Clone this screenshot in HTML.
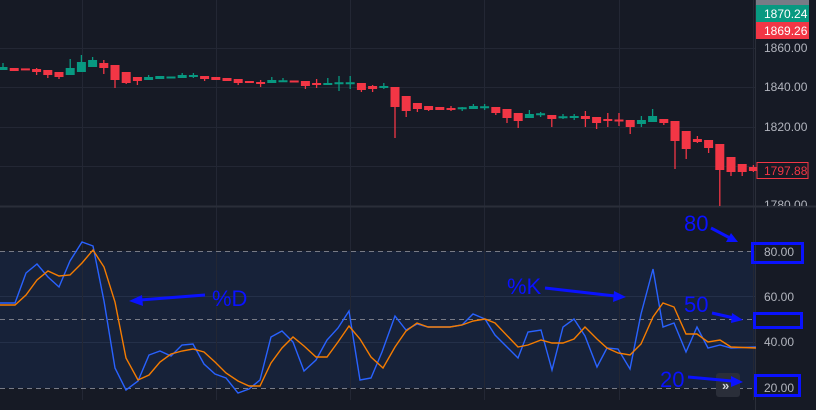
<!DOCTYPE html>
<html><head><meta charset="utf-8"><style>
html,body{margin:0;padding:0;background:#161a25;width:816px;height:410px;overflow:hidden;font-family:"Liberation Sans",sans-serif}
svg{position:absolute;left:0;top:0}
</style></head><body>
<svg id="s" width="816" height="410" xmlns="http://www.w3.org/2000/svg" font-family="Liberation Sans, sans-serif">
<defs><clipPath id="top"><rect x="0" y="0" width="816" height="206"/></clipPath></defs>
<rect width="816" height="410" fill="#161a25"/>
<rect x="0" y="251" width="755" height="137" fill="#172239"/>
<g stroke="#232734" stroke-width="1">
<line x1="0" y1="48.5" x2="755" y2="48.5"/><line x1="0" y1="87.5" x2="755" y2="87.5"/><line x1="0" y1="127.5" x2="755" y2="127.5"/><line x1="0" y1="166.5" x2="755" y2="166.5"/>
<line x1="0" y1="296.5" x2="755" y2="296.5" stroke="#243049"/><line x1="0" y1="342.5" x2="755" y2="342.5" stroke="#243049"/>
<line x1="82.5" y1="0" x2="82.5" y2="400"/><line x1="216.5" y1="0" x2="216.5" y2="400"/><line x1="350.5" y1="0" x2="350.5" y2="400"/><line x1="484.5" y1="0" x2="484.5" y2="400"/><line x1="619.5" y1="0" x2="619.5" y2="400"/><line x1="753.5" y1="0" x2="753.5" y2="400"/>
</g>
<line x1="0" y1="206.5" x2="816" y2="206.5" stroke="#2a2e39" stroke-width="2"/>
<line x1="755.5" y1="0" x2="755.5" y2="410" stroke="#2a2e39"/>
<g stroke="#787b86" stroke-dasharray="5,4"><line x1="0" y1="251.5" x2="755" y2="251.5"/><line x1="0" y1="319.5" x2="755" y2="319.5"/><line x1="0" y1="388.5" x2="755" y2="388.5"/></g>
<g id="c" clip-path="url(#top)"></g>
<polyline fill="none" stroke="#2962ff" stroke-width="1.4" points="0,303 15,303 26,273 37,264 48,277 59,287 70,261 82,242 93,246 104,301 115,368 126,390 138,381 149,355 160,351 171,356 182,345 193,344 204,364 215,374 226,378 238,393 249,389 260,380 271,337 282,331 293,342 304,371 316,360 327,340 338,328 349,311 360,380 371,378 382,352 395,316 406,330 417,324 428,327 450,327 462,325 473,314 485,319 495,335 518,358 528,332 541,330 552,370 563,327 574,319 585,336 597,367 607,348 618,349 630,369 641,314 653,269 663,327 674,323 686,352 697,327 708,348 720,345 731,348 756,347"/>
<polyline fill="none" stroke="#f57c00" stroke-width="1.4" points="0,305 15,305 26,295 37,280 48,271 59,276 70,275 82,263 93,250 104,267 115,302 126,358 138,380 149,375 160,362 171,354 182,351 193,349 204,352 215,362 226,373 238,381 249,386 260,386 271,363 282,348 293,337 304,346 316,357 327,357 338,342 349,326 360,339 371,357 383,368 395,347 406,331 417,323 428,327 450,327 462,325 473,321 485,319 495,323 518,347 528,345 541,340 552,343 563,343 574,339 585,327 597,339 607,348 618,353 630,355 641,344 653,317 663,303 674,307 686,334 697,334 708,342 720,340 731,347 756,348"/>
<g font-size="12" fill="#b2b5be">
<text x="764" y="52">1860.00</text><text x="764" y="91">1840.00</text><text x="764" y="131">1820.00</text><text x="764" y="209" clip-path="url(#top)">1780.00</text>
<text x="764" y="256">80.00</text><text x="764" y="301">60.00</text><text x="764" y="346">40.00</text><text x="764" y="392">20.00</text>
</g>
<rect x="756" y="0" width="53" height="5" fill="#787b86"/>
<rect x="756" y="5" width="53" height="17" fill="#089981"/><text x="764" y="18" font-size="12" fill="#fff">1870.24</text>
<rect x="756" y="22" width="53" height="17" fill="#f23645"/><text x="764" y="35" font-size="12" fill="#fff">1869.26</text>
<rect x="757" y="162.5" width="51" height="16" fill="#161a25" stroke="#f23645"/><text x="764" y="175" font-size="12" fill="#f23645">1797.88</text>
<rect x="716" y="373" width="24" height="24" rx="3" fill="#2a2e39"/><text x="722" y="390" font-size="13" fill="#d1d4dc" font-weight="bold">»</text>
<g fill="#0a12ff" font-size="22">
<text x="684" y="231">80</text><text x="212" y="306">%D</text><text x="507" y="294">%K</text><text x="684" y="312">50</text><text x="660" y="387">20</text>
</g>
<g stroke="#0a12ff" stroke-width="3" fill="none">
<rect x="752.5" y="243.5" width="50" height="19"/><rect x="754.5" y="313.5" width="47" height="14"/><rect x="755.5" y="375.5" width="44" height="20"/>
<line x1="711" y1="228" x2="730" y2="238"/><line x1="205" y1="295" x2="140" y2="300"/><line x1="545" y1="288" x2="615" y2="296"/><line x1="712" y1="313" x2="734" y2="318"/><line x1="688" y1="377" x2="732" y2="381"/>
</g>
<g fill="#0a12ff">
<polygon points="738,242 726,242 731,233"/><polygon points="129,301 142,295 143,306"/><polygon points="626,297 614,291 613,302"/><polygon points="743,320 732,313 731,323"/><polygon points="743,382 731,376 731,387"/>
</g>
</svg>
<script>
var d=[[70,67,63,70],[68,71,68,71],[69,69.8,69,70],[69,72,68,75],[70,75,70,78],[72,77,72,79],[75,68,59,75],[72,62,55,72],[67,60,57,67],[63,68,60,74],[65,80,65,88],[72,83,72,84],[77,81,77,85],[80,77,75,80],[79,76,76,79],[78,77,77,78],[78,75,73,78],[77,75,73,78],[76,79,76,81],[77,80,77,80],[78,81,78,81],[79,83,79,85],[81,83,81,83],[82,84,80,87],[83,80,77,83],[81.5,81,78,82],[81,82,81,82],[81,86,81,89],[83,85,79,88],[85,83,78,85],[83.5,83,76,91],[83.5,83,76,89],[83,90,83,92],[86,89,85,92],[88,86,83,89],[87,107,87,138],[96,111,96,117],[103,109,103,112],[106,110,106,111],[107,110,107,110],[108,110,106,111],[108.5,108,107,111],[109,106,104,109],[107.5,107,104,110],[107,113,107,115],[109,118,109,123],[113,121,113,128],[118,114,110,118],[114.5,114,112,117],[115,119,115,127],[117.5,117,114,119],[118,116,114,120],[116,119,111,127],[117,123,117,129],[119,121,113,127],[120,121,113,126],[120,127,120,134],[124,120,116,127],[122,116,109,122],[119,123,119,125],[121,141,121,169],[131,149,131,159],[139,142,136,143],[140,148,140,153],[144,170,144,207],[157,172,157,176],[164,172,164,176],[167,171,165,172]];
var g=document.getElementById('c'),h='';
d.forEach(function(c,i){var x=3+11.2*i,o=c[0],cl=c[1],col=cl<o?'#089981':'#f23645';var t=Math.min(o,cl),b=Math.max(o,cl);if(b-t<2){t=(t+b)/2-1;b=t+2;}
h+='<line x1="'+x+'" x2="'+x+'" y1="'+c[2]+'" y2="'+c[3]+'" stroke="'+col+'" stroke-width="1.3"/><rect x="'+(x-4.5)+'" y="'+t+'" width="9" height="'+(b-t)+'" fill="'+col+'"/>';});
g.innerHTML=h;
</script>
</body></html>
